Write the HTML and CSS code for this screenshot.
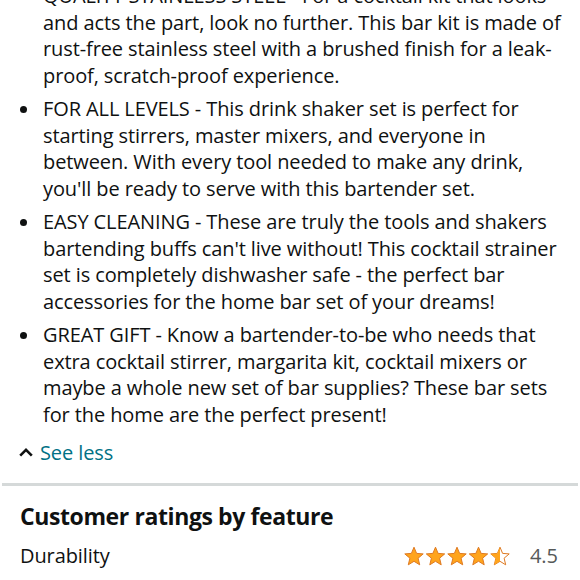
FILE: index.html
```html
<!DOCTYPE html>
<html>
<head>
<meta charset="utf-8">
<link rel="stylesheet" href="styles.css">
</head>
<body>
<div class="page">
  <ul class="bullets">
    <li>QUALITY STAINLESS STEEL - For a cocktail kit that looks and acts the part, look no further. This bar kit is made of rust-free stainless steel with a brushed finish for a leak-proof, scratch-proof experience.</li>
    <li>FOR ALL LEVELS - This drink shaker set is perfect for starting stirrers, master mixers, and everyone in between. With every tool needed to make any drink, you'll be ready to serve with this bartender set.</li>
    <li>EASY CLEANING - These are truly the tools and shakers bartending buffs can't live without! This cocktail strainer set is completely dishwasher safe - the perfect bar accessories for the home bar set of your dreams!</li>
    <li>GREAT GIFT - Know a bartender-to-be who needs that extra cocktail stirrer, margarita kit, cocktail mixers or maybe a whole new set of bar supplies? These bar sets for the home are the perfect present!</li>
  </ul>
  <div class="see-less">
    <svg class="caret" width="14" height="10" viewBox="0 0 14 10"><path d="M1.2 8.6 L7 2.8 L12.8 8.6" fill="none" stroke="#0f1111" stroke-width="2.6"/></svg>
    <span class="link">See less</span>
  </div>
  <div class="divider"></div>
  <section class="ratings">
    <h2 class="title">Customer ratings by feature</h2>
    <div class="row">
      <span class="feature">Durability</span>
      <span class="stars">
        <svg width="108" height="22" viewBox="0 0 108 22">
          <defs>
            <path id="st" d="M10 1.2 L12.6 7.4 L19.2 7.9 L14.1 12.2 L15.7 18.8 L10 15.3 L4.3 18.8 L5.9 12.2 L0.8 7.9 L7.4 7.4 Z"/>
            <clipPath id="half"><rect x="0" y="0" width="10" height="22"/></clipPath>
          </defs>
          <use href="#st" x="0" y="1" fill="#ffa41c" stroke="#de7921" stroke-width="1"/>
          <use href="#st" x="21.5" y="1" fill="#ffa41c" stroke="#de7921" stroke-width="1"/>
          <use href="#st" x="43" y="1" fill="#ffa41c" stroke="#de7921" stroke-width="1"/>
          <use href="#st" x="64.5" y="1" fill="#ffa41c" stroke="#de7921" stroke-width="1"/>
          <g transform="translate(86 1)">
            <use href="#st" fill="#fff" stroke="#de7921" stroke-width="1"/>
            <use href="#st" fill="#ffa41c" clip-path="url(#half)"/>
          </g>
        </svg>
      </span>
      <span class="score">4.5</span>
    </div>
  </section>
</div>
</body>
</html>
```

FILE: styles.css
```css
html, body {
  margin: 0;
  padding: 0;
  background: #fff;
}
body {
  font-family: "Open Sans", "Noto Sans", sans-serif;
  color: #0f1111;
  overflow: hidden;
}
.page {
  width: 580px;
  margin-top: -17px;
}
.bullets {
  list-style: none;
  margin: 0;
  padding: 0 18px 0 0;
}
.bullets li {
  display: grid;
  grid-template-columns: 43px 1fr;
  font-size: 20px;
  letter-spacing: -0.1px;
  line-height: 26.7px;
  margin-bottom: 6.2px;
}
.bullets li::before {
  content: "";
  width: 7px;
  height: 7px;
  border-radius: 50%;
  background: #0f1111;
  margin: 10px 0 0 20px;
}
.see-less {
  display: flex;
  align-items: center;
  gap: 7px;
  padding: 2px 0 0 19px;
  height: 30px;
}
.caret {
  display: block;
}
.link {
  color: #007185;
  font-size: 20px;
  letter-spacing: -0.1px;
  line-height: 27px;
}
.divider {
  height: 3px;
  background: #d5d9d9;
  margin: 16px 2px 0 2px;
}
.ratings {
  padding: 14px 20px 0 20px;
}
.title {
  margin: 0;
  font-size: 23px;
  letter-spacing: -0.4px;
  font-weight: 700;
  line-height: 32px;
}
.row {
  display: flex;
  align-items: center;
  margin-top: 10px;
}
.feature {
  flex: 1;
  font-size: 20px;
  letter-spacing: -0.1px;
  line-height: 27px;
}
.stars {
  display: flex;
  margin-right: 18px;
}
.score {
  font-size: 20px;
  color: #565959;
  line-height: 27px;
  margin-right: 2px;
}
```
